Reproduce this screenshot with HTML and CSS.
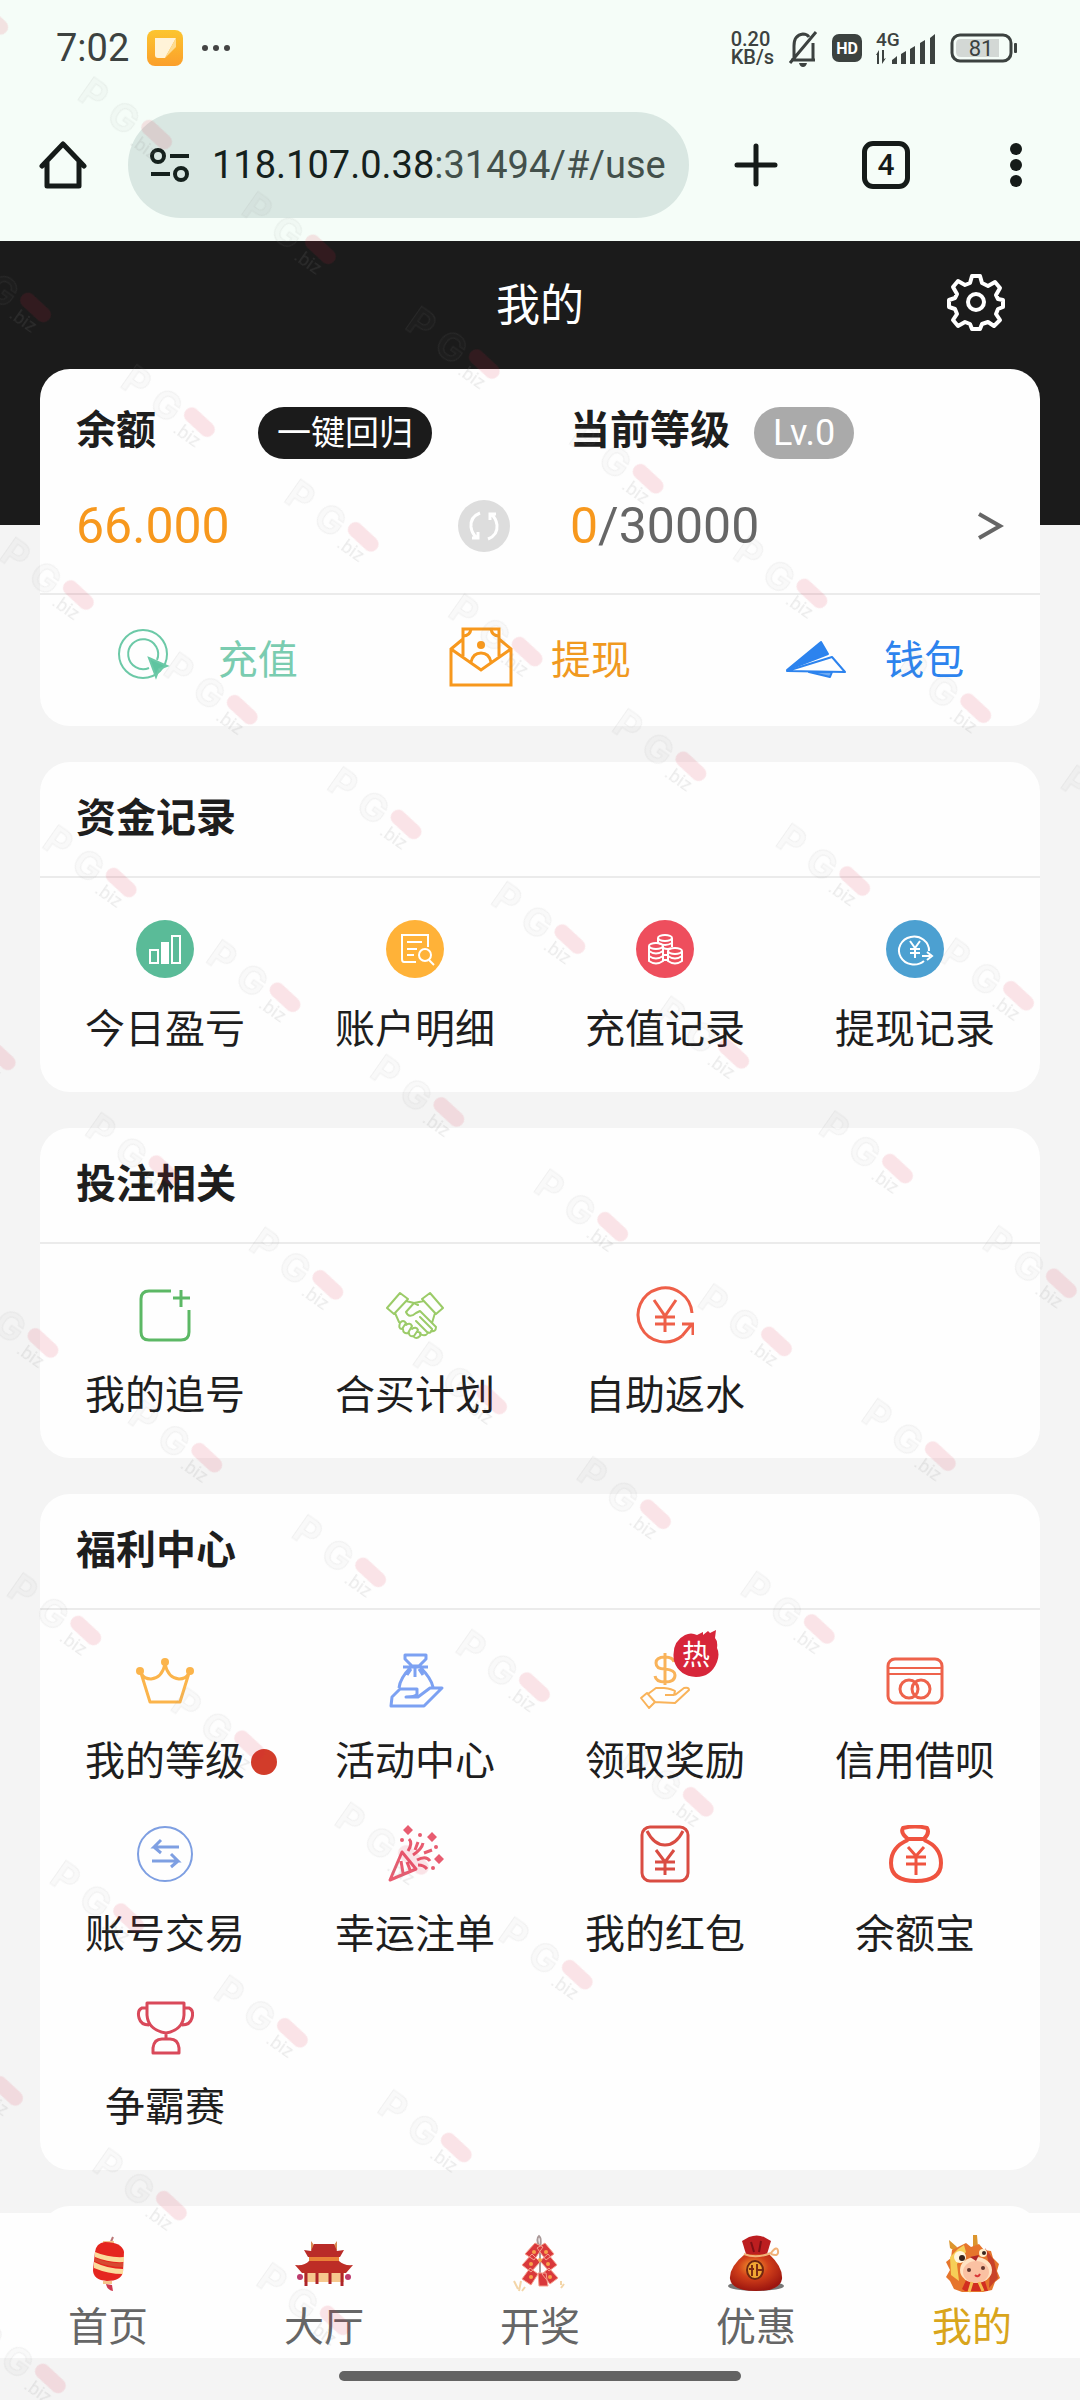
FILE: index.html
```html
<!DOCTYPE html>
<html lang="zh-CN">
<head>
<meta charset="utf-8">
<meta name="viewport" content="width=device-width, initial-scale=1">
<title>我的</title>
<link rel="stylesheet" href="styles.css">
</head>
<body>
<div class="chrome">
  <div class="status">
    <div class="status-left">
      <span class="clock">7:02</span>
      <svg width="36" height="36" viewBox="0 0 36 36"><defs><linearGradient id="note" x1="0" y1="0" x2="0" y2="1"><stop offset="0" stop-color="#fcc52f"/><stop offset="1" stop-color="#fb9f2b"/></linearGradient></defs><rect width="36" height="36" rx="8" fill="url(#note)"/><path d="M8 8h21L18 28H11q-3 0-3-3z" fill="#fff3d8"/><path d="M29 8v9L18 28z" fill="#fddc92"/></svg>
      <svg width="30" height="8" viewBox="0 0 30 8" fill="#444"><circle cx="4" cy="4" r="3"/><circle cx="15" cy="4" r="3"/><circle cx="26" cy="4" r="3"/></svg>
    </div>
    <div class="status-right">
      <span class="speed"><span>0.20</span><span>KB/s</span></span>
      <svg width="34" height="38" viewBox="0 0 34 38" fill="none" stroke="#3c4240" stroke-width="3"><path d="M5 31h24M8 30V17q0-11 9-12 4 0 6 3M27 14v16M4 34L30 3"/><path d="M13 34h8q-1 4-4 4t-4-4z" fill="#3c4240" stroke="none"/></svg>
      <svg width="30" height="28" viewBox="0 0 30 28"><rect width="30" height="28" rx="7" fill="#3c4240"/><text x="15" y="20" class="hd">HD</text></svg>
      <svg width="64" height="40" viewBox="0 -4 64 40" fill="#3c4240"><text x="2" y="14" class="net">4G</text><path d="M2 23l3-5v14h-2V23zM8 18h2v9l2-1-4 6zM18 28q3-2 5-4v8h-5zM27 22l5-3v13h-5zM36 17l5-3v18h-5zM46 11l5-3v24h-5zM56 6l5-4v30h-5z"/></svg>
      <svg width="68" height="30" viewBox="0 0 68 30"><rect x="2" y="2" width="59" height="26" rx="8" fill="none" stroke="#3c4240" stroke-width="3"/><path d="M11 6h38v18H11q-5 0-5-5v-8q0-5 5-5z" fill="#d3d8d5"/><rect x="64" y="10" width="3" height="10" rx="1" fill="#3c4240"/><text x="31" y="23" class="charge">81</text></svg>
    </div>
  </div>
  <div class="toolbar">
    <button class="tool" aria-label="主页"><svg width="48" height="48" viewBox="0 0 48 48" fill="none" stroke="#151b19" stroke-width="5" stroke-linejoin="round" stroke-linecap="round"><path d="M3 25L24 3l21 22M8 21v24h32V21"/></svg></button>
    <div class="address">
      <svg width="40" height="34" viewBox="0 0 40 34" fill="none" stroke="#15211d" stroke-width="4"><circle cx="8" cy="8" r="6"/><path d="M20 8h19M1 26h19"/><circle cx="31" cy="26" r="6"/></svg>
      <a class="url" href="#"><span>118.107.0.38</span>:31494/#/use</a>
    </div>
    <div class="tools">
      <button class="tool" aria-label="新建标签页"><svg width="48" height="48" viewBox="0 0 48 48" stroke="#151b19" stroke-width="5" stroke-linecap="round"><path d="M24 5v38M5 24h38"/></svg></button>
      <button class="tool tabs"><span>4</span></button>
      <button class="tool" aria-label="菜单"><svg width="48" height="48" viewBox="0 0 48 48" fill="#151b19"><circle cx="24" cy="8" r="6"/><circle cx="24" cy="24" r="6"/><circle cx="24" cy="40" r="6"/></svg></button>
    </div>
  </div>
</div>

<header class="title-bar">
  <h1>我的</h1>
  <button class="settings" aria-label="设置"><svg width="58" height="58" viewBox="-29 -29 58 58" fill="none" stroke="#fff" stroke-width="4" stroke-linejoin="round"><circle r="8"/><path d="M-4-26h8l2 7 6 3 7-4 5 6-4 7 2 4 5 1v7l-5 2-2 5 4 6-6 6-6-4-6 2-2 5h-8l-2-5-5-2-7 4-5-6 4-6-2-5-6-2v-7l6-2 2-4-4-7 5-6 7 4 5-2z"/></svg></button>
</header>

<main class="content">
  <section class="card">
    <div class="account">
      <div class="row balance-head"><h2>余额</h2><button class="pill recall">一键回归</button></div>
      <div class="row"><h2>当前等级</h2><span class="pill level">Lv.0</span></div>
      <div class="row spread"><span class="amount gold">66.000</span>
        <button class="tool" aria-label="刷新"><svg width="52" height="52" viewBox="0 0 52 52" fill="none" stroke="#fff" stroke-width="3"><circle cx="26" cy="26" r="26" fill="#ddd" stroke="none"/><path d="M22 13Q12 17 13 27q1 7 6 11M30 39q10-4 9-14-1-7-6-11M14 38h6v-6M38 14h-6v6"/></svg></button></div>
      <a class="row spread" href="#"><span class="amount"><span class="gold">0</span>/30000</span>
        <svg width="27" height="30" viewBox="0 0 27 30" fill="none" stroke="#666" stroke-width="4"><path d="M2 3l21 12L2 27"/></svg></a>
    </div>
    <nav class="actions">
      <a href="#" class="deposit"><svg width="64" height="60" viewBox="0 0 64 60" fill="none" stroke="#6cc9a7" stroke-width="2"><circle cx="27" cy="27" r="24"/><path d="M33 41a15 15 0 1 1 8-8"/><path d="M33 31l18 8-8 3-3 8z" fill="#5fc4a0"/></svg>充值</a>
      <a href="#" class="withdraw"><svg width="64" height="60" viewBox="0 0 64 60" fill="none" stroke="#f7981d" stroke-width="3"><path d="M14 12L2 22v36h60V22L50 12M2 22l30 21 30-21M14 29V2h36v27"/><path d="M14 9q7 0 8-7M50 9q-7 0-8-7M22 35q2-9 10-9t10 9"/><circle cx="32" cy="18" r="4" fill="#f7981d" stroke="none"/></svg>提现</a>
      <a href="#" class="wallet"><svg width="64" height="60" viewBox="0 0 64 60" fill="none" stroke="#2c83ee" stroke-width="2" stroke-linejoin="round"><path d="M5 43L39 15l7 12z" fill="#2c83ee"/><path d="M5 44l45-14 13 15z"/><path d="M27 45l21 5 2-5z" fill="#70abf2"/></svg>钱包</a>
    </nav>
  </section>

  <section class="card">
    <h2 class="card-title">资金记录</h2>
    <div class="grid">
      <a href="#"><svg viewBox="0 0 58 58" fill="none" stroke="#fff" stroke-width="2"><circle cx="29" cy="29" r="29" fill="#5abb98" stroke="none"/><rect x="14" y="30" width="8" height="13"/><rect x="26" y="23" width="6" height="20" fill="#fff"/><rect x="36" y="16" width="8" height="27"/></svg>今日盈亏</a>
      <a href="#"><svg viewBox="0 0 58 58" fill="none" stroke="#fff" stroke-width="2"><circle cx="29" cy="29" r="29" fill="#ffb238" stroke="none"/><path d="M30 42H18q-2 0-2-3V15h26v12M21 22h15M21 29h10M21 35h7"/><circle cx="39" cy="35" r="6"/><path d="M43 40l5 5"/></svg>账户明细</a>
      <a href="#"><svg viewBox="0 0 58 58" fill="none" stroke="#fff" stroke-width="2"><circle cx="29" cy="29" r="29" fill="#ee4e5d" stroke="none"/><ellipse cx="29" cy="18" rx="7" ry="3"/><path d="M22 18v5q7 4 14 0v-5M36 23v4"/><ellipse cx="20" cy="26" rx="7" ry="3"/><path d="M13 26v15q7 5 14 0V26M13 31q7 5 14 0M13 36q7 5 14 0M27 28q5 2 8 0"/><ellipse cx="39" cy="31" rx="7" ry="3"/><path d="M32 31v10q7 5 14 0V31M32 36q7 5 14 0M27 35h5M27 40h5"/></svg>充值记录</a>
      <a href="#"><svg viewBox="0 0 58 58" fill="none" stroke="#fff" stroke-width="2"><circle cx="29" cy="29" r="29" fill="#4ca0d1" stroke="none"/><path d="M38 41a15 14 0 1 1 5-10M24 21l5 7 5-7M29 28v10M24 29h10M24 33h10M36 36h8M41 32l5 4-5 4"/></svg>提现记录</a>
    </div>
  </section>

  <section class="card">
    <h2 class="card-title">投注相关</h2>
    <div class="grid">
      <a href="#"><svg viewBox="0 0 58 58" fill="none" stroke="#5cb865" stroke-width="3"><path d="M35 5H13q-8 0-8 8v33q0 8 8 8h32q8 0 8-8V24M45 4v17M37 12h17"/></svg>我的追号</a>
      <a href="#"><svg viewBox="0 0 58 58" fill="none" stroke="#9bcb68" stroke-width="2" stroke-linejoin="round" stroke-linecap="round"><path d="M14 7l8 6L8 28l-7-6zM44 7l-8 6 14 15 7-6zM20 15l8 2 4 2M38 15l-10 2-8 9q3 7 10 1l4-2 16 16q0 5-5 4M49 27l-3 10M9 27l4 9M14 37q3-4 6 0l-4 6q-4 0-2-6zM20 39q4-3 6 1l-4 7q-5 1-5-4M26 43q4-3 6 1l-4 6q-5 1-5-3M32 46q4 0 2 4-4 4-7 0M34 48q5 3 8-1M30 35l11 11q4 2 5-2M34 31l12 12"/></svg>合买计划</a>
      <a href="#"><svg viewBox="0 0 58 58" fill="none" stroke="#ee5f48" stroke-width="3"><path d="M46 50A27 27 0 1 1 56 27M46 50l10-12M46 38h11v11M18 14l11 16 11-16M29 30v16M19 31h20M19 38h20"/></svg>自助返水</a>
    </div>
  </section>

  <section class="card">
    <h2 class="card-title">福利中心</h2>
    <div class="grid">
      <a href="#"><svg viewBox="0 0 58 58" fill="none" stroke="#fbb44b" stroke-width="3" stroke-linejoin="round"><path d="M5 21l9 29h30l9-29q-3 6-10 6-11-1-14-15-3 14-14 15-7 0-10-6z"/><g fill="#fbb44b" stroke="none"><circle cx="29" cy="10" r="4"/><circle cx="4" cy="19" r="4"/><circle cx="54" cy="19" r="4"/></g></svg><span class="dotted">我的等级</span></a>
      <a href="#"><svg viewBox="0 0 58 58" fill="none" stroke="#7ca1f2" stroke-width="3" stroke-linejoin="round"><path d="M19 3h21v4l-7 7h-7l-7-7zM17 15h25M25 15Q14 26 13 36M34 15q11 11 13 20M29 16v9M25 17l-4 6M33 17l4 6M5 54l1-9 8-8h17v5q-1 3-11 3h12l12-9h12L38 54z"/></svg>活动中心</a>
      <a href="#" class="hot"><svg viewBox="0 0 58 58" fill="none" stroke="#f9b35a" stroke-width="2" stroke-linejoin="round"><path d="M38 10q-1-5-9-5-9 0-9 6t9 6q10 1 10 6 0 7-10 7-9 0-10-6M29 1v32" stroke-width="3"/><path d="M5 46l6-5 8 9-6 6zM12 42l8-6h8q8 1 11 3l-1 4h-9M39 43l9-7q5-1 5 2L39 51l-21-1"/></svg>
        <svg class="hot-badge" viewBox="0 0 46 48"><path d="M24 5l6-3v3l5-4 2 2 6-3-1 8q3 3 2 10 3 6 0 14-6 15-21 15Q6 46 1 31-2 12 12 5q6-3 12 0z" fill="#d7263a"/><text x="23" y="35">热</text></svg>领取奖励</a>
      <a href="#"><svg viewBox="0 0 58 58" fill="none" stroke="#ee624b" stroke-width="3"><rect x="2" y="7" width="54" height="44" rx="7"/><path d="M2 16h54M2 22h54" stroke-width="2"/><circle cx="23" cy="37" r="9"/><circle cx="35" cy="37" r="9"/></svg>信用借呗</a>
      <a href="#"><svg viewBox="0 0 58 58" fill="none" stroke="#7e9fe2" stroke-width="2"><circle cx="29" cy="29" r="27"/><path d="M43 22H18l7-7M18 22l7 6M16 36h26l-7-7M42 36l-7 6" stroke-width="3"/></svg>账号交易</a>
      <a href="#"><svg viewBox="0 0 58 58" fill="none" stroke="#e85c70" stroke-width="3" stroke-linejoin="round"><path d="M4 55l12-28 14 17zM15 36l2 12M21 37l3 8M22 26q5-8 1-12M27 30q9-6 10-12M31 35q9-5 13 1M32 40q6 0 9 4M29 25l3-8M38 28l8-3"/><g fill="#e85c70" stroke="none"><path d="M22 0l5 5-5 5-5-5zM46 7l5 5-5 5-5-5zM53 29l5 5-5 5-5-5z"/><circle cx="16" cy="15" r="2"/><circle cx="34" cy="10" r="2"/><circle cx="50" cy="22" r="2"/><circle cx="47" cy="43" r="2"/></g></svg>幸运注单</a>
      <a href="#"><svg viewBox="0 0 58 58" fill="none" stroke="#d94c42" stroke-width="3"><rect x="6" y="2" width="46" height="54" rx="8"/><path d="M11 6q7 14 18 14T47 6M20 25l9 12 9-12M29 37v13M19 37h20M19 44h20"/></svg>我的红包</a>
      <a href="#"><svg viewBox="0 0 58 58" fill="none" stroke="#ef533f" stroke-width="4" stroke-linejoin="round"><path d="M17 3q12-3 24 0 3 5-3 11H22q-8-6-5-11zM22 15Q5 22 5 38q0 18 25 18t25-18q0-16-17-23"/><path d="M22 22l8 9 8-9M30 31v19M20 32h20M20 39h20" stroke-width="3"/></svg>余额宝</a>
      <a href="#"><svg viewBox="0 0 58 58" fill="none" stroke="#d9495a" stroke-width="3" stroke-linejoin="round"><path d="M11 5h37v12q-1 15-18 18-18-3-19-18zM11 10H6q-5 2-3 10 2 7 10 7M48 10h5q5 2 3 10-2 7-10 7M30 35v6M17 55v-5q1-9 9-9h8q8 0 9 9v5z"/></svg>争霸赛</a>
    </div>
  </section>

  <section class="card next"></section>
</main>

<nav class="tab-bar">
  <a href="#"><svg viewBox="0 0 60 60"><path d="M32 10l3-7" stroke="#b77" stroke-width="2"/><path d="M25 7h11v5H25z" fill="#f4c48c"/><path d="M27 8q17 0 19 10l-1 20q-2 9-16 9-14-1-14-11l2-18q1-9 10-10z" fill="#e5261f"/><path d="M17 18q14 6 29 5v5q-15 1-29-5zM16 28q14 7 29 7v5q-15 0-29-6z" fill="#fbdc9c"/><path d="M17 24q14 6 28 5v4q-15 0-29-6z" fill="#d64a32"/><path d="M25 47h9v3h-9z" fill="#f4c48c"/><path d="M28 50q1 6 7 7l-1-6z" fill="#cf3950"/></svg>首页</a>
  <a href="#"><svg viewBox="0 0 60 60"><path d="M17 7l3 4h20l3-4v9H17z" fill="#d98a53"/><path d="M20 10h20l3 7 7-1-4 7H14l-4-7 7 1z" fill="#b92b28"/><path d="M15 23h30v5H15z" fill="#e98138"/><path d="M15 27h30q5 5 14 4l-7 8H8l-7-8q10 1 14-4z" fill="#bd2d26"/><path d="M10 39h40v9H10z" fill="#f6c88e"/><path d="M12 39v13M23 39v11M36 39v11M48 39v13" stroke="#ae2429" stroke-width="3"/><circle cx="6" cy="43" r="3" fill="#bd3b6d"/><circle cx="54" cy="43" r="3" fill="#bd3b6d"/></svg>大厅</a>
  <a href="#"><svg viewBox="0 0 60 60"><path d="M29 13q-3-9 0-11 3 2 1 11v32" fill="none" stroke="#a99" stroke-width="2"/><g fill="#d9383b" stroke="#f5a08e" stroke-width="1"><path d="M25 9l8 4-9 13-9-6zM35 9l9 11-8 6-9-12zM22 20l8 8-9 10-9-7zM38 20l9 11-8 6-9-10zM20 34l8 6-7 11-9-6zM39 34l9 10-8 6-8-10zM28 39h8l2 13h-9z"/></g><g fill="#f7a24a"><circle cx="24" cy="18" r="2"/><circle cx="36" cy="18" r="2"/><circle cx="21" cy="30" r="2"/><circle cx="38" cy="30" r="2"/><circle cx="30" cy="26" r="2"/><circle cx="21" cy="43" r="2"/><circle cx="40" cy="43" r="2"/></g><path d="M4 47l4 8M11 47l-2 10M15 53l-3 4M51 47v4M54 50l-3 4" stroke="#f3d5a8" stroke-width="2"/></svg>开奖</a>
  <a href="#"><svg viewBox="0 0 60 60"><defs><radialGradient id="bag" cx=".45" cy=".35" r=".65"><stop offset="0" stop-color="#f6a331"/><stop offset=".45" stop-color="#d2401a"/><stop offset="1" stop-color="#9d160f"/></radialGradient></defs><ellipse cx="30" cy="52" rx="28" ry="5" fill="#777"/><path d="M19 20h24q14 13 13 25-2 12-26 12T4 45Q3 33 19 20z" fill="url(#bag)"/><path d="M16 7l7-4q8-3 15 0l7 4-4 13H20z" fill="#bc1e20"/><path d="M25 8l3 10M35 7l-2 11" stroke="#7e1015" stroke-width="2"/><path d="M18 20q12 5 27-1 6-8 7-2 1 6-7 3" fill="none" stroke="#f1b279" stroke-width="2"/><ellipse cx="29" cy="36" rx="8" ry="9" fill="#f2a633" stroke="#6f2711" stroke-width="2"/><path d="M26 31v11M31 30v12M23 35h5M30 36h6" stroke="#7e2c12" stroke-width="2"/></svg>优惠</a>
  <a href="#" class="active"><svg viewBox="0 0 60 60"><path d="M7 6l8 7-1 5-6-4zM31 1h4l1 12-5 1z" fill="#dc952d"/><path d="M16 13l8-4 5 4 8-3 5 6 7 1 2 7 6 6-2 7 3 7-5 4-3 8-9 2H20l-8-3-4-8-4-4 4-7-4-8 5-4 1-8z" fill="#e6752c"/><path d="M8 23l8-8 6-4 2 7-9 12 2 17-8-6z" fill="#f6cf57"/><path d="M43 14l9 12 4 18-9 10 1-20z" fill="#c84228"/><path d="M20 55l5-11h17l4 13H23z" fill="#d22d20"/><ellipse cx="34" cy="36" rx="16" ry="13" fill="#ffe2c2"/><ellipse cx="34" cy="38" rx="13" ry="11" fill="#fac1a2"/><circle cx="18" cy="23" r="6" fill="#fff7df"/><circle cx="20" cy="24" r="3" fill="#39241d"/><circle cx="41" cy="19" r="4" fill="#ffeecb"/><circle cx="42" cy="19" r="2" fill="#39241d"/><path d="M28 23l9-2-3 6z" fill="#af2628"/><circle cx="27" cy="36" r="2" fill="#63372e"/><circle cx="41" cy="34" r="2" fill="#63372e"/><path d="M33 41q3 3 5-1" stroke="#d93738" stroke-width="2" fill="none"/><path d="M30 48l-3 10M37 48l4 9" stroke="#f4bd51" stroke-width="3"/></svg>我的</a>
</nav>
<div class="gesture"><span></span></div>

<svg class="watermark" aria-hidden="true">
  <defs>
    <pattern id="mark" width="200" height="211" patternUnits="userSpaceOnUse">
      <g class="mark-big"><text x="26" y="114">P</text><text x="62" y="116">G</text></g>
      <rect x="95" y="90" width="36" height="15" rx="7" transform="rotate(8 113 97)" fill="#e02040" opacity=".12"/>
      <text class="mark-small" x="96" y="121">.biz</text>
    </pattern>
  </defs>
  <rect x="-400" width="2000" height="2321" fill="url(#mark)" transform="translate(120 -10) rotate(35)"/>
</svg>
</body>
</html>
```
FILE: styles.css
```css
* { box-sizing: border-box; }

body {
  margin: 0;
  height: 100vh;
  display: flex;
  flex-direction: column;
  overflow: hidden;
  background: #f4f4f4;
  color: #1e1e1e;
  font-family: Roboto, "Noto Sans CJK SC", sans-serif;
  font-size: 40px;
}

a { color: inherit; text-decoration: none; }
h1, h2 { margin: 0; }
svg { display: block; flex: none; }
button {
  padding: 0;
  border: 0;
  background: none;
  color: inherit;
  font: inherit;
}

/* Phone status bar and browser toolbar */
.chrome { flex: none; background: #f5fdf8; }
.status {
  display: flex;
  align-items: center;
  justify-content: space-between;
  height: 95px;
  padding: 0 62px 0 56px;
  color: #3c4240;
}
.status-left { display: flex; align-items: center; gap: 18px; }
.status-right { display: flex; align-items: center; gap: 12px; }
.clock { font-size: 38px; }
.speed {
  display: flex;
  flex-direction: column;
  font-size: 20px;
  line-height: 18px;
  font-weight: 500;
}
.hd { font-size: 16px; font-weight: 700; fill: #fff; text-anchor: middle; }
.net { font-size: 19px; font-weight: 500; }
.charge { font-size: 22px; text-anchor: middle; fill: #3c4240; }

.toolbar {
  display: flex;
  align-items: center;
  padding: 17px 40px 23px 39px;
  color: #151b19;
}
.address {
  flex: 1;
  min-width: 0;
  display: flex;
  align-items: center;
  gap: 22px;
  height: 106px;
  margin: 0 43px 0 41px;
  padding: 0 20px 0 22px;
  border-radius: 53px;
  background: #d9e7e2;
}
.url {
  flex: 1;
  white-space: nowrap;
  font-size: 38px;
  color: #43504b;
}
.url span { color: #15211d; }
.tools { display: flex; gap: 82px; }
.tool { display: flex; align-items: center; justify-content: center; min-width: 48px; }
.tabs span {
  width: 48px;
  height: 48px;
  border: 5px solid #151b19;
  border-radius: 11px;
  font-size: 30px;
  font-weight: 500;
  line-height: 38px;
}

/* Page header */
.title-bar {
  flex: none;
  display: grid;
  grid-template-columns: 1fr auto 1fr;
  align-items: center;
  height: 128px;
  padding: 0 75px 6px;
  background: #1b1b1b;
  color: #fff;
}
.title-bar h1 { grid-column: 2; font-size: 44px; font-weight: 400; }
.settings { justify-self: end; }

.content {
  flex: 1;
  min-height: 0;
  display: flex;
  flex-direction: column;
  gap: 36px;
  padding: 0 40px;
  overflow: auto;
  scrollbar-width: none;
  background: linear-gradient(#1b1b1b 156px, #f4f4f4 156px);
}
.card { flex: none; border-radius: 30px; background: #fefefe; }
.card.next { height: 330px; }

/* Balance and level */
.account {
  display: grid;
  grid-template-columns: 1fr 1fr;
  gap: 33px 60px;
  padding: 34px 36px 37px;
  border-bottom: 2px solid #ebebeb;
}
.row { display: flex; align-items: center; gap: 24px; height: 60px; }
.row h2 { padding-bottom: 4px; font-size: 40px; font-weight: 700; line-height: 56px; }
.balance-head { gap: 102px; }
.spread { justify-content: space-between; }
.pill {
  height: 52px;
  padding: 0 19px;
  border-radius: 26px;
  color: #fff;
  font-size: 34px;
  line-height: 52px;
}
.recall { background: #1b1b1b; }
.level { background: #aaa; font-size: 36px; }
.amount { font-size: 50px; color: #666; }
.gold { color: #f7981d; }

.actions {
  display: grid;
  grid-template-columns: repeat(3, 1fr);
  height: 131px;
  padding-bottom: 8px;
}
.actions a { display: flex; align-items: center; justify-content: center; gap: 38px; }
.deposit { color: #7accb0; }
.withdraw { color: #f0991f; }
.wallet { color: #2c83ee; }

/* Shortcut cards */
.card-title {
  padding-left: 36px;
  border-bottom: 2px solid #ebebeb;
  font-size: 40px;
  font-weight: 700;
  line-height: 114px;
}
.grid {
  display: grid;
  grid-template-columns: repeat(4, 1fr);
  row-gap: 35px;
  padding: 42px 0 34px;
}
.grid a {
  position: relative;
  display: flex;
  flex-direction: column;
  align-items: center;
  gap: 24px;
  line-height: 56px;
}
.grid svg { width: 58px; height: 58px; }
.dotted { position: relative; }
.dotted::after {
  content: "";
  position: absolute;
  top: 15px;
  left: 100%;
  width: 26px;
  height: 26px;
  margin-left: 6px;
  border-radius: 50%;
  background: #d23c2a;
}
.grid .hot-badge {
  position: absolute;
  top: -22px;
  left: calc(50% + 8px);
  width: 46px;
  height: 48px;
}
.hot-badge text { font-size: 28px; fill: #fff; text-anchor: middle; }

/* Bottom tabs */
.tab-bar {
  flex: none;
  display: grid;
  grid-template-columns: repeat(5, 1fr);
  padding: 21px 0 6px;
  background: #fefefe;
  color: #666;
}
.tab-bar a {
  display: flex;
  flex-direction: column;
  align-items: center;
  gap: 10px;
  line-height: 48px;
}
.tab-bar svg { width: 60px; height: 60px; }
.tab-bar .active { color: #d9a51c; }

.gesture {
  flex: none;
  display: flex;
  align-items: flex-start;
  justify-content: center;
  height: 42px;
  padding-top: 13px;
}
.gesture span { width: 402px; height: 10px; border-radius: 5px; background: #636363; }

/* Repeating brand mark over the whole screen */
.watermark {
  position: fixed;
  inset: 0;
  width: 100%;
  height: 100%;
  pointer-events: none;
}
.mark-big {
  font-family: Inter, sans-serif;
  font-size: 38px;
  font-weight: 700;
  fill: #888;
  fill-opacity: .04;
  stroke: #888;
  stroke-opacity: .1;
}
.mark-small { font-size: 18px; fill: #888; fill-opacity: .16; }
```
